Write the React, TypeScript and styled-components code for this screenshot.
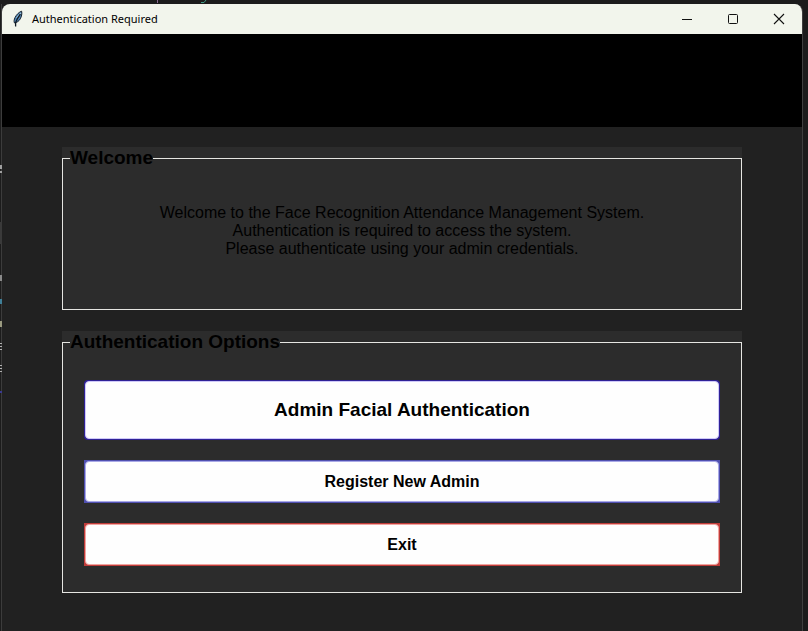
import React from "react";
import styled, { createGlobalStyle } from "styled-components";

const GlobalStyle = createGlobalStyle`
  * { box-sizing: border-box; }
  body {
    margin: 0;
    background: #1c1c1c;
    font-family: "Liberation Sans", Arial, sans-serif;
    color: #000;
  }
`;

const Desktop = styled.div`
  display: grid;
  grid-template-columns: 2px minmax(0, 1fr) 5px;
  grid-template-rows: 4px 1fr;
  min-height: 100vh;
  background: #1c1c1c;
`;

const EditorTop = styled.div`
  grid-column: 1 / -1;
  padding-left: 156px;
`;

const EditorSide = styled.div`
  display: flex;
  flex-direction: column;
  background: linear-gradient(to right, #1c1c1c 50%, #3c3c3c 50%);
`;

const Mark = styled.span<{ $color: string; $gap: number; $height: number }>`
  display: block;
  flex: none;
  height: ${(p) => p.$height}px;
  margin-top: ${(p) => p.$gap}px;
  background: ${(p) => p.$color};
`;

const Window = styled.main`
  display: flex;
  flex-direction: column;
  border-right: 1px solid #3f3f3f;
  border-radius: 8px 8px 0 0;
  background: #212121;
  overflow: hidden;
`;

const TitleBar = styled.header`
  display: flex;
  align-items: center;
  height: 30px;
  padding-left: 9px;
  background: #f2f5ec;
`;

const Title = styled.h1`
  flex: 1;
  margin: 0 0 0 7px;
  font: 400 11px/16px "Noto Sans", "Open Sans", sans-serif;
`;

const WindowButton = styled.button`
  display: flex;
  align-items: center;
  justify-content: center;
  width: 46px;
  height: 30px;
  padding: 0;
  border: 0;
  background: transparent;
  color: #111;
`;

const Banner = styled.div`
  height: 93px;
  background: #000;
`;

const Content = styled.div`
  display: flex;
  flex-direction: column;
  gap: 21px;
  padding: 20px 60px 38px;
`;

const Panel = styled.section`
  background: #2c2c2c;
`;

const Group = styled.fieldset`
  min-width: 0;
  margin: 0;
  padding: 0;
  border: 1px solid #e6e6e2;
`;

const Legend = styled.legend`
  margin-left: 7px;
  padding: 0;
  font-size: 19px;
  font-weight: 700;
  line-height: 22px;
`;

const Message = styled.p`
  margin: 0;
  padding: 35px 20px 51px;
  font-size: 16px;
  line-height: 18px;
  text-align: center;
`;

const Actions = styled.div`
  display: flex;
  flex-direction: column;
  gap: 20px;
  padding: 27px 21px 26px;
`;

const Face = styled.span`
  display: flex;
  flex: 1;
  align-self: stretch;
  align-items: center;
  justify-content: center;
  border: 1px solid;
  border-radius: 4px;
  background: #fefefe;
`;

const ActionButton = styled.button<{ $edge: string; $glow: string; $primary?: boolean }>`
  display: flex;
  width: 100%;
  height: ${(p) => (p.$primary ? 60 : 43)}px;
  padding: 1px;
  border: 0;
  border-radius: ${(p) => (p.$primary ? 4 : 0)}px;
  background: ${(p) => p.$edge};
  color: #000;
  font-family: inherit;
  font-size: ${(p) => (p.$primary ? 19 : 16)}px;
  font-weight: 700;

  ${Face} {
    border-color: ${(p) => p.$glow};
  }
`;

const FeatherIcon = () => (
  <svg width="14" height="18" viewBox="0 0 14 18" aria-hidden="true">
    <path d="M10.6 1.2C8.2 2 5.4 4.6 4 7.6C3.1 9.6 2.8 11.4 3.4 12.9C5.6 12.7 8 11.2 9.3 8.8C10.6 6.4 11.2 3.6 10.6 1.2Z" fill="#4f84b4" stroke="#14202c" strokeWidth="1" />
    <path d="M9.8 2.8L5.6 8.2" stroke="#a8d4ee" strokeWidth="1.2" />
    <path d="M9.4 4C7.6 6.4 5.6 9.6 4.6 12.6L4.6 16.4" fill="none" stroke="#101a24" strokeWidth="1.3" />
  </svg>
);

const sideMarks = [
  { color: "#a0a0a0", gap: 161, height: 4 },
  { color: "#a0a0a0", gap: 2, height: 2 },
  { color: "#3a3a3a", gap: 49, height: 22 },
  { color: "#8a8a8a", gap: 31, height: 6 },
  { color: "#3f7f98", gap: 18, height: 5 },
  { color: "#9a9a80", gap: 17, height: 6 },
  { color: "#b0b0b0", gap: 16, height: 1 },
  { color: "#b0b0b0", gap: 2, height: 1 },
  { color: "#b0b0b0", gap: 2, height: 1 },
  { color: "#b0b0b0", gap: 15, height: 1 },
  { color: "#b0b0b0", gap: 2, height: 1 },
  { color: "#b0b0b0", gap: 2, height: 1 },
  { color: "#3a3a90", gap: 19, height: 2 },
];

export default function App() {
  return (
    <>
      <GlobalStyle />
      <Desktop>
        <EditorTop aria-hidden="true">
          <svg width="56" height="4" viewBox="0 0 56 4" fill="none" display="block">
            <path d="M1.5 0V3" stroke="#8a6a90" />
            <path d="M50 0L48 2.5H45" stroke="#3f9a84" />
          </svg>
        </EditorTop>
        <EditorSide aria-hidden="true">
          {sideMarks.map((mark, i) => (
            <Mark key={i} $color={mark.color} $gap={mark.gap} $height={mark.height} />
          ))}
        </EditorSide>
        <Window>
          <TitleBar>
            <FeatherIcon />
            <Title>Authentication Required</Title>
            <WindowButton type="button" aria-label="Minimize">
              <svg width="12" height="12" viewBox="0 0 12 12" stroke="currentColor">
                <path d="M1 6.5H11" />
              </svg>
            </WindowButton>
            <WindowButton type="button" aria-label="Maximize">
              <svg width="12" height="12" viewBox="0 0 12 12" fill="none" stroke="currentColor">
                <rect x="1.5" y="1.5" width="9" height="9" rx="1" />
              </svg>
            </WindowButton>
            <WindowButton type="button" aria-label="Close">
              <svg width="12" height="12" viewBox="0 0 12 12" stroke="currentColor" strokeWidth="1.1">
                <path d="M1 1L11 11M11 1L1 11" />
              </svg>
            </WindowButton>
          </TitleBar>
          <Banner />
          <Content>
            <Panel>
              <Group>
                <Legend>Welcome</Legend>
                <Message>
                  Welcome to the Face Recognition Attendance Management System.
                  <br />
                  Authentication is required to access the system.
                  <br />
                  Please authenticate using your admin credentials.
                </Message>
              </Group>
            </Panel>
            <Panel>
              <Group>
                <Legend>Authentication Options</Legend>
                <Actions>
                  <ActionButton type="button" $edge="#2f2196" $glow="#cfc9f8" $primary>
                    <Face>Admin Facial Authentication</Face>
                  </ActionButton>
                  <ActionButton type="button" $edge="#5050b0" $glow="#a9a9e6">
                    <Face>Register New Admin</Face>
                  </ActionButton>
                  <ActionButton type="button" $edge="#c03c3a" $glow="#f0a5a0">
                    <Face>Exit</Face>
                  </ActionButton>
                </Actions>
              </Group>
            </Panel>
          </Content>
        </Window>
      </Desktop>
    </>
  );
}
